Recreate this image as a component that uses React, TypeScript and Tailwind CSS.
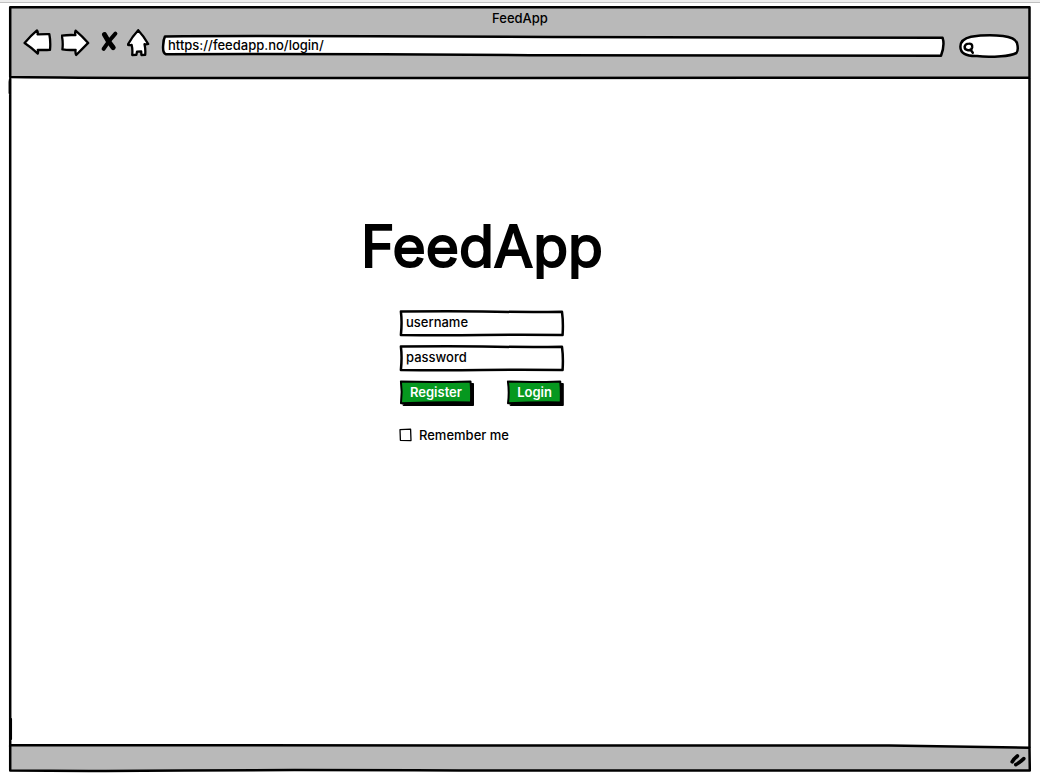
import type { InputHTMLAttributes, ButtonHTMLAttributes } from "react";

type OutlineProps = { w: number; h: number; d: string; fill?: string; stroke?: number };

function Outline({ w, h, d, fill = "white", stroke = 2.5 }: OutlineProps) {
  return (
    <svg
      aria-hidden="true"
      className="pointer-events-none absolute inset-0 h-full w-full overflow-visible"
      viewBox={`0 0 ${w} ${h}`}
      preserveAspectRatio="none"
    >
      <path
        d={d}
        fill={fill}
        stroke="black"
        strokeWidth={stroke}
        strokeLinejoin="round"
        strokeLinecap="round"
        vectorEffect="non-scaling-stroke"
      />
    </svg>
  );
}

function Field({ label, ...rest }: { label: string } & InputHTMLAttributes<HTMLInputElement>) {
  return (
    <div className="relative h-[26px]">
      <Outline w={164} h={26} d="M.9 1.6 Q40 .9 82 1.4 Q125 2.4 162 1.8 Q163.4 12 162.6 24.9 Q120 24.4 82 24.9 Q40 25.6 .9 24.9 Q2.2 12 .9 1.6Z" />
      <input
        aria-label={label}
        placeholder={label}
        className="relative block h-full w-full bg-transparent px-1.5 pb-0.5 outline-none placeholder:text-black placeholder:opacity-100"
        {...rest}
      />
    </div>
  );
}

function SketchButton({ w, children, ...rest }: { w: number } & ButtonHTMLAttributes<HTMLButtonElement>) {
  return (
    <button className="relative h-[26px] pr-3 pb-0.5 pl-2.5 font-semibold text-white" {...rest}>
      <Outline w={w} h={26} stroke={1} fill="black" d={`M2.5 4 L${w - 0.5} 3.5 L${w - 0.5} 25.5 L3.5 25.5Z`} />
      <Outline
        w={w}
        h={26}
        stroke={2}
        fill="#06981f"
        d={`M.9 1.6 Q${w / 2} 2.4 ${w - 3.5} 1.4 Q${w - 2.6} 10 ${w - 3} 22.4 Q${w / 2} 22 1 23.2 Q2.4 12 .9 1.6Z`}
      />
      <span className="relative">{children}</span>
    </button>
  );
}

function Toolbar() {
  const icon = {
    fill: "white",
    stroke: "black",
    strokeWidth: 2.3,
    strokeLinejoin: "round" as const,
    strokeLinecap: "round" as const,
  };
  return (
    <div className="flex items-center pr-3 pl-3.5">
      <button aria-label="Back" className="shrink-0">
        <svg width="30" height="28" viewBox="0 0 30 28" {...icon}>
          <path d="M1.6 14 Q8 6.4 14 1.4 Q15.2 3.3 14.6 5.4 Q20 5 26.3 5.1 Q27.8 12.6 27 20.8 Q21 21.2 14.8 20.8 Q15.4 23.1 14.8 24.6 Q8.5 18.6 1.6 14Z" />
        </svg>
      </button>
      <button aria-label="Forward" className="ml-2 shrink-0">
        <svg width="30" height="28" viewBox="0 0 30 28" {...icon}>
          <path d="M.8 6.6 Q7.4 5.7 14.4 6.1 Q13.8 3.6 14.6 1.6 Q21.1 7.1 27.2 13.9 Q20.6 20.6 15.2 26 Q14.1 23.6 14.6 20.8 Q7.6 21.4 1.4 20.4 Q2.3 13.6 .8 6.6Z" />
        </svg>
      </button>
      <button aria-label="Stop" className="ml-2 shrink-0">
        <svg width="20" height="28" viewBox="0 0 20 28" fill="none" stroke="black" strokeLinecap="round">
          <path strokeWidth="5" d="M5.5 5.6 Q8.7 11.9 14.2 18.6" />
          <path strokeWidth="4" d="M16.4 4.6 Q10.6 10.6 4.6 19.8" />
        </svg>
      </button>
      <button aria-label="Home" className="ml-2 shrink-0">
        <svg width="24" height="28" viewBox="0 0 24 28" {...icon}>
          <path d="M11.2 1.2 Q16.7 7 21.2 15 Q19.4 15.7 17.5 15.2 Q18.7 20.3 18.2 25.8 L14.4 26 L14.2 22.4 L10 22.6 L9.4 25.9 L5.2 26 Q5.8 20.3 4.6 15.8 Q2.5 16.4 .8 15.6 Q5.2 7.6 11.2 1.2Z" />
        </svg>
      </button>
      <div className="relative mt-1.5 ml-[11px] h-[22px] min-w-0 flex-1">
        <Outline w={784} h={22} d="M3 1.4 Q100 .6 390 2 Q600 3 781.6 2.8 Q784 10 780 20.8 Q600 21 390 20.2 Q200 18.8 4 19.2 Q.4 18 1.2 10 Q1.4 4.5 3 1.4Z" />
        <input
          aria-label="Address"
          type="url"
          defaultValue="https://feedapp.no/login/"
          className="relative block h-full w-full bg-transparent px-1.5 pb-0.5 outline-none"
        />
      </div>
      <div className="relative mt-1.5 ml-3.5 h-6 w-[60px] shrink-0">
        <Outline w={60} h={24} d="M12 2.7 Q28 .4 44 2 Q56 3.4 58 9 Q59.8 16 57.4 19 Q52 21.6 42 22.2 Q28 23.4 18 22 Q1.2 22.5 1.4 12.5 Q1.6 5 12 2.7Z" />
        <svg
          aria-hidden="true"
          className="absolute top-2 left-1"
          width="14"
          height="14"
          viewBox="0 0 14 14"
          fill="none"
          stroke="black"
          strokeWidth="2.4"
          strokeLinecap="round"
        >
          <path d="M5.8 1.6 Q9.6 1.4 9.2 5.2 Q8.6 8.6 5 8.2 Q1.4 7.8 1.6 4.6 Q2.4 1.6 5.8 1.6Z M7.8 8 L9.8 10.8" />
        </svg>
        <input aria-label="Search" type="search" className="relative block h-full w-full bg-transparent pr-2 pl-4 outline-none" />
      </div>
    </div>
  );
}

export default function App() {
  return (
    <div className="flex min-h-screen flex-col bg-white font-['Inter',sans-serif] text-[13px] leading-5 font-medium text-black">
      <div className="h-[3px] border-b border-[#c0c0c0] bg-[#ececec]" />
      <div className="mx-[9px] mt-[3px] mb-1.5 flex flex-1 flex-col">
        <header className="relative h-[73px]">
          <Outline w={1022} h={73} fill="#b9b9b9" d="M1.2 1.2 L1020.5 1.2 L1020.5 71.8 Q600 72.2 160 72 Q60 71.8 1.2 71 Z" />
          <div className="relative">
            <p className="pt-0.5 text-center">FeedApp</p>
            <Toolbar />
          </div>
        </header>

        <main className="relative flex flex-1 justify-center pr-[76px]">
          <Outline w={1022} h={665} fill="none" d="M1.2 0 L.8 3 L.8 14 M1.2 0 L1.2 668 M1.8 640 L1.8 660 M1020.5 0 L1020.5 668" />
          <div className="relative flex flex-col items-center pt-[132px]">
            <h1 className="text-[57px] leading-[72px] font-normal [-webkit-text-stroke:2px_black]">FeedApp</h1>
            <form className="mt-[27px] w-[164px]" onSubmit={(e) => e.preventDefault()}>
              <div className="flex flex-col gap-[9px]">
                <Field label="username" type="text" />
                <Field label="password" type="password" />
                <div className="flex justify-between">
                  <SketchButton type="button" w={74}>
                    Register
                  </SketchButton>
                  <SketchButton type="submit" w={56}>
                    Login
                  </SketchButton>
                </div>
              </div>
              <label className="mt-[19px] flex items-center gap-[7px]">
                <span className="relative h-3 w-3">
                  <Outline w={12} h={12} stroke={1.3} d="M0 .6 L10.6 .2 L11 11.6 L.4 11.3Z" />
                  <input type="checkbox" className="peer relative block h-3 w-3 appearance-none" />
                  <svg
                    aria-hidden="true"
                    className="pointer-events-none absolute inset-0 hidden peer-checked:block"
                    viewBox="0 0 12 12"
                    fill="none"
                    stroke="black"
                    strokeWidth="2"
                  >
                    <path d="M2.5 6 L5 9 L10 2.5" />
                  </svg>
                </span>
                Remember me
              </label>
            </form>
          </div>
        </main>

        <footer className="relative h-7">
          <Outline w={1022} h={28} fill="#b9b9b9" d="M1.2 1.2 Q150 2.2 450 1.4 Q800 .8 880 1.5 Q960 2.6 1020.5 3.8 L1020.8 26.6 Q700 27.4 450 26.4 Q200 25.6 80 27 L1.2 26.6Z" />
          <svg
            aria-hidden="true"
            className="relative mt-2 mr-1 ml-auto block"
            width="18"
            height="16"
            viewBox="0 0 18 16"
            stroke="black"
            strokeWidth="3.6"
            strokeLinecap="round"
            fill="none"
          >
            <path d="M3.2 9.8 Q5 6.8 8.4 4 M6.8 12.6 Q10.5 10.8 14.8 6.6" />
          </svg>
        </footer>
      </div>
    </div>
  );
}
